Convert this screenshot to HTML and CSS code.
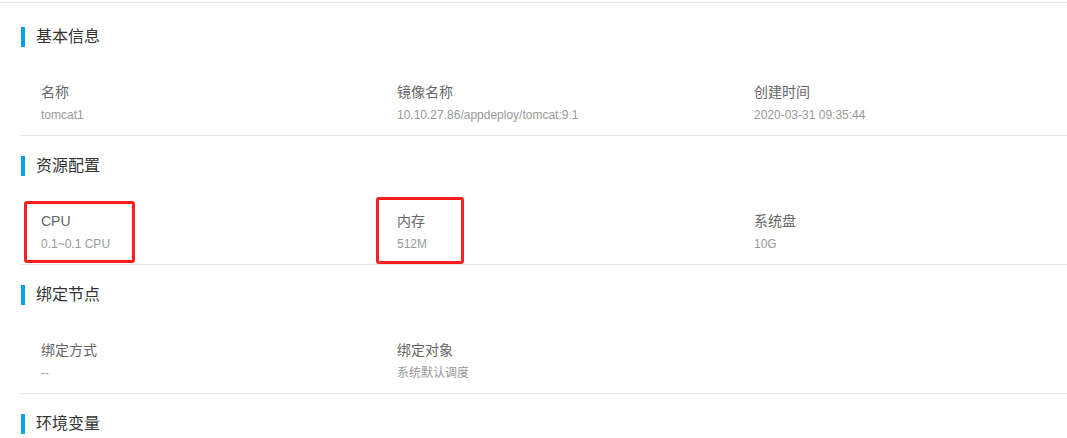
FILE: index.html
```html
<!DOCTYPE html>
<html lang="zh-CN">
<head>
<meta charset="utf-8">
<title>详情</title>
<link rel="stylesheet" href="styles.css">
</head>
<body>
<div class="page">
  <section class="section section-first">
    <h2 class="section-title">基本信息</h2>
    <div class="fields">
      <div class="field"><div class="label">名称</div><div class="value">tomcat1</div></div>
      <div class="field"><div class="label">镜像名称</div><div class="value">10.10.27.86/appdeploy/tomcat:9.1</div></div>
      <div class="field"><div class="label">创建时间</div><div class="value">2020-03-31 09:35:44</div></div>
    </div>
  </section>
  <section class="section">
    <h2 class="section-title">资源配置</h2>
    <div class="fields">
      <div class="field"><div class="label">CPU</div><div class="value">0.1~0.1 CPU</div><span class="mark mark-cpu"></span></div>
      <div class="field"><div class="label">内存</div><div class="value">512M</div><span class="mark mark-mem"></span></div>
      <div class="field"><div class="label">系统盘</div><div class="value">10G</div></div>
    </div>
  </section>
  <section class="section">
    <h2 class="section-title">绑定节点</h2>
    <div class="fields">
      <div class="field"><div class="label">绑定方式</div><div class="value">--</div></div>
      <div class="field"><div class="label">绑定对象</div><div class="value">系统默认调度</div></div>
    </div>
  </section>
  <section class="section">
    <h2 class="section-title">环境变量</h2>
  </section>
</div>
</body>
</html>
```

FILE: styles.css
```css
html, body {
  margin: 0;
  padding: 0;
  background: #ffffff;
  overflow: hidden;
}
body {
  font-family: "Liberation Sans", "Noto Sans CJK SC", Arial, sans-serif;
}
.page {
  margin-top: 2px;
  border-top: 1px solid #e9e9e9;
  padding-left: 21px;
}
.section {
  padding-top: 20px;
}
.section-first {
  padding-top: 24px;
}
.section-title {
  margin: 0;
  height: 20px;
  line-height: 20px;
  border-left: 4px solid #0aa0e8;
  padding-left: 11px;
  font-size: 16px;
  font-weight: normal;
  color: #333333;
}
.fields {
  display: grid;
  grid-template-columns: 356px 357px 1fr;
  margin-top: 35px;
  padding: 0 0 12px 20px;
  border-bottom: 1px solid #e8e8e8;
}
.field {
  position: relative;
}
.label {
  font-size: 14px;
  line-height: 20px;
  color: #666666;
}
.value {
  margin-top: 5px;
  font-size: 12px;
  line-height: 16px;
  color: #999999;
  white-space: nowrap;
}
.mark {
  position: absolute;
  box-sizing: border-box;
  border: 3px solid #ff1f1f;
  border-radius: 3px;
}
.mark-cpu {
  left: -17px;
  top: -10px;
  width: 111px;
  height: 62px;
}
.mark-mem {
  left: -21px;
  top: -14px;
  width: 88px;
  height: 67px;
}
```
